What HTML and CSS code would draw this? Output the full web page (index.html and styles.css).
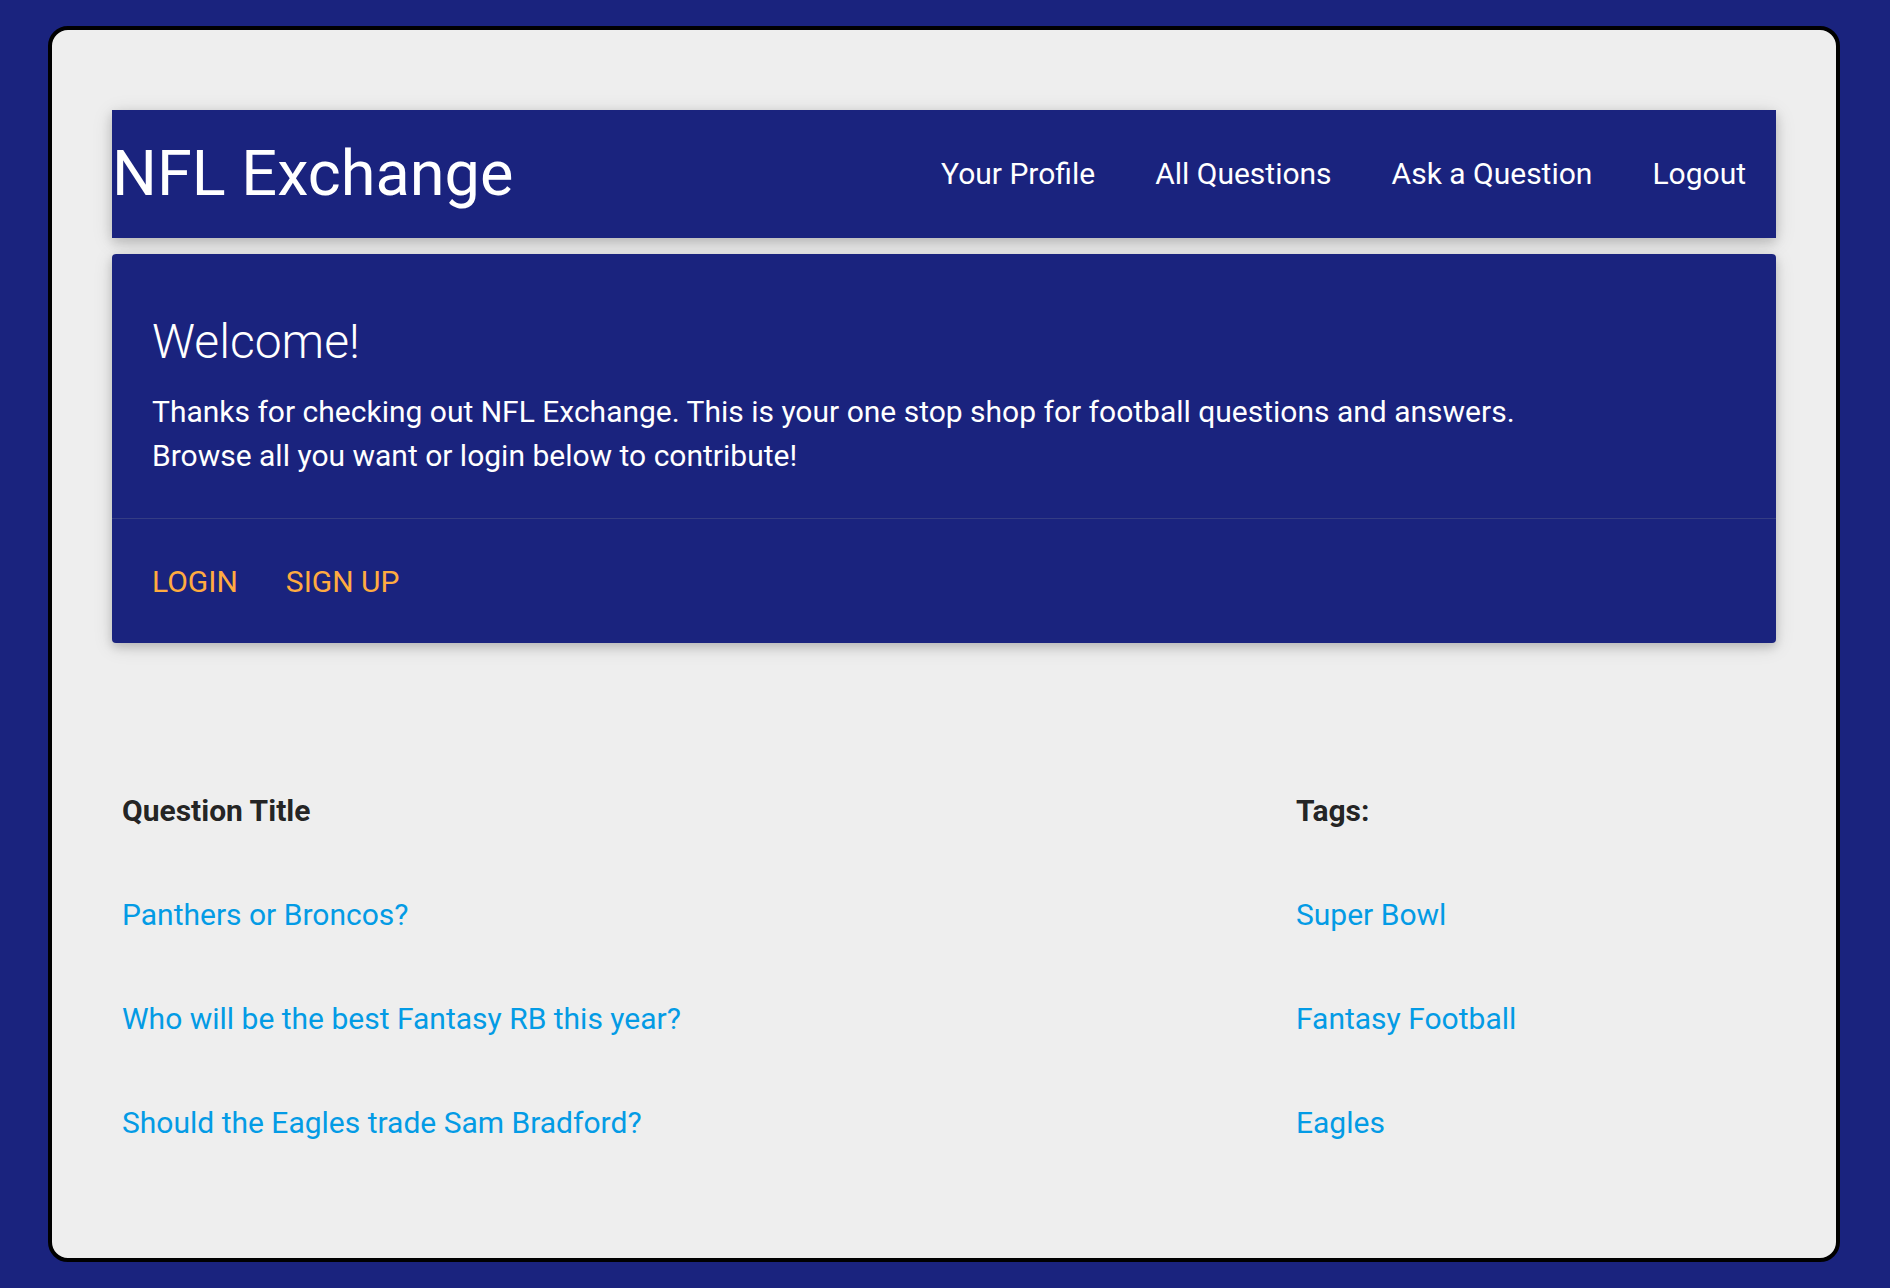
FILE: index.html
```html
<!DOCTYPE html>
<html>
<head>
<meta charset="utf-8">
<title>NFL Exchange</title>
<link rel="stylesheet" href="styles.css">
</head>
<body>
<div class="frame">
  <nav class="nav">
    <a class="brand" href="#">NFL Exchange</a>
    <ul class="nav-links">
      <li><a href="#">Your Profile</a></li>
      <li><a href="#">All Questions</a></li>
      <li><a href="#">Ask a Question</a></li>
      <li><a href="#">Logout</a></li>
    </ul>
  </nav>
  <div class="card">
    <div class="card-content">
      <span class="card-title">Welcome!</span>
      <p class="card-text">Thanks for checking out NFL Exchange. This is your one stop shop for football questions and answers.<br>Browse all you want or login below to contribute!</p>
    </div>
    <div class="card-action">
      <a href="#">Login</a>
      <a href="#">Sign up</a>
    </div>
  </div>
  <table class="questions">
    <thead>
      <tr><th class="col-title">Question Title</th><th>Tags:</th></tr>
    </thead>
    <tbody>
      <tr><td><a href="#">Panthers or Broncos?</a></td><td><a href="#">Super Bowl</a></td></tr>
      <tr><td><a href="#">Who will be the best Fantasy RB this year?</a></td><td><a href="#">Fantasy Football</a></td></tr>
      <tr><td><a href="#">Should the Eagles trade Sam Bradford?</a></td><td><a href="#">Eagles</a></td></tr>
    </tbody>
  </table>
</div>
</body>
</html>
```
FILE: styles.css
```css
* { box-sizing: border-box; }
html, body {
  margin: 0;
  padding: 0;
}
body {
  background: #1a237e;
  height: 1288px;
  overflow: hidden;
  font-family: Roboto, "Noto Sans", sans-serif;
  padding-top: 26px;
}
a { text-decoration: none; }
.frame {
  margin: 0 50px 0 48px;
  height: 1236px;
  border: 4px solid #000;
  border-radius: 20px;
  background: #eeeeee;
  padding: 80px 60px 0 60px;
}
.nav {
  height: 128px;
  background: #1a237e;
  display: flex;
  justify-content: space-between;
  align-items: center;
  box-shadow: 0 4px 10px 0 rgba(0,0,0,0.16), 0 4px 20px 0 rgba(0,0,0,0.12);
}
.brand {
  color: #fff;
  font-size: 63px;
  line-height: 128px;
  margin-left: 0;
}
.nav-links {
  list-style: none;
  margin: 0;
  padding: 0;
  display: flex;
}
.nav-links a {
  display: block;
  color: #fff;
  font-size: 30px;
  line-height: 128px;
  padding: 0 30px;
}
.card {
  margin-top: 16px;
  background: #1a237e;
  border-radius: 4px;
  box-shadow: 0 4px 10px 0 rgba(0,0,0,0.16), 0 4px 20px 0 rgba(0,0,0,0.12);
  color: #fff;
}
.card-content {
  padding: 40px;
}
.card-title {
  display: block;
  font-size: 48px;
  font-weight: 300;
  line-height: 96px;
}
.card-text {
  margin: 0;
  font-size: 30px;
  line-height: 44px;
}
.card-action {
  border-top: 1px solid rgba(160,160,160,0.2);
  padding: 40px 40px 39px;
  display: flex;
}
.card-action a {
  color: #ffab40;
  text-transform: uppercase;
  font-size: 30px;
  line-height: 45px;
  margin-right: 48px;
}
.questions {
  margin-top: 116px;
  width: 100%;
  border-collapse: collapse;
  font-size: 30px;
}
.questions th, .questions td {
  text-align: left;
  padding: 30px 10px;
  line-height: 44px;
}
.questions th {
  font-weight: 700;
  color: rgba(0,0,0,0.87);
}
.col-title { width: 1174px; }
.questions a { color: #039be5; }
```
